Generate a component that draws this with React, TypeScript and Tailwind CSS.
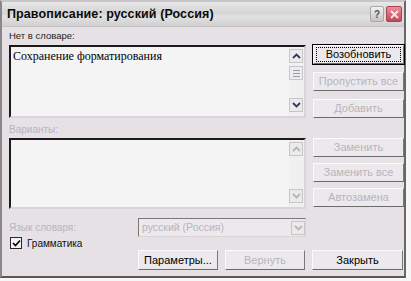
import React from 'react'

const ui = { fontFamily: '"Liberation Sans", Arial, sans-serif' }
const serif = { fontFamily: '"Liberation Serif", "Times New Roman", serif' }

function Btn({ label, disabled, focused, w = 'w-[91px]', h = 'h-[20px]' }: { label: string; disabled?: boolean; focused?: boolean; w?: string; h?: string }) {
  return (
    <div
      className={`${w} ${h} shrink-0 flex items-center justify-center bg-[#ece9ec] border border-t-[#fbfbfb] border-l-[#fbfbfb] border-r-[#7a767a] border-b-[#6e6a6e] text-[11px] ${
        disabled ? 'text-[#b8b4bc]' : 'text-black'
      } ${focused ? 'outline outline-1 outline-black' : ''}`}
    >
      <span className={focused ? 'border border-dotted border-black px-[9px] leading-[13px]' : ''}>{label}</span>
    </div>
  )
}

function Arrow({ up, disabled }: { up?: boolean; disabled?: boolean }) {
  return (
    <div className="w-[14px] h-[14px] bg-[#ecebec] border border-[#c8c4c8] flex items-center justify-center">
      <svg width="9" height="6" viewBox="0 0 9 6">
        <path
          d={up ? 'M1 5 L4.5 1.5 L8 5' : 'M1 1 L4.5 4.5 L8 1'}
          fill="none"
          stroke={disabled ? '#b8b4b8' : '#2a3a6a'}
          strokeWidth="1.8"
        />
      </svg>
    </div>
  )
}

function ListBox({ children, disabled, h }: { children?: React.ReactNode; disabled?: boolean; h: string }) {
  return (
    <div className={`${h} w-[297px] flex bg-[#f4f4f4] border-2 border-t-[#1a1a1a] border-l-[#1a1a1a] border-r-[#d8d4d8] border-b-[#d8d4d8]`}>
      <div className="flex-1 pl-[1px]">{children}</div>
      <div className="w-[15px] flex flex-col justify-between bg-[#f1f0f1] pt-[2px] pb-[4px]">
        <Arrow up disabled={disabled} />
        {!disabled && (
          <div className="flex-1 flex flex-col pt-[3px]">
            <div className="w-[14px] h-[14px] bg-[#eeedee] border border-[#c8c4c8] flex flex-col items-center justify-center gap-[2px]">
              <div className="w-[7px] h-[1px] bg-[#9a98a4]" />
              <div className="w-[7px] h-[1px] bg-[#9a98a4]" />
              <div className="w-[7px] h-[1px] bg-[#9a98a4]" />
            </div>
          </div>
        )}
        <Arrow disabled={disabled} />
      </div>
    </div>
  )
}

export default function App() {
  return (
    <div className="w-[411px] h-[281px] bg-[#f7f7f7] overflow-hidden" style={ui}>
      <div className="w-[406px] h-[278px] flex flex-col bg-[#e5e1e5] border-2 border-l-[#8a868a] border-t-[#c8c4c8] border-r-[#6a666a] border-b-[#5a565a]">
        {/* Title bar */}
        <div className="h-[25px] shrink-0 flex items-center justify-between pl-[5px] pr-[2px] bg-[linear-gradient(180deg,#e8e8e8_0%,#d4d4d4_45%,#e2e2e2_60%,#d0d0d0_100%)] border-b border-[#c6c2c6]">
          <span className="text-[12.5px] font-bold text-[#0a0a0a] tracking-[0.1px]">Правописание: русский (Россия)</span>
          <div className="flex gap-[2px]">
            <div className="w-[14px] h-[16px] rounded-[2px] bg-[linear-gradient(180deg,#f2f2f2,#c4c4c4)] border border-[#a8a8a8] flex items-center justify-center text-[10px] font-bold text-[#505060]">?</div>
            <div className="w-[16px] h-[16px] rounded-[2px] bg-[linear-gradient(180deg,#e89098,#c04858)] border border-[#b04050] flex items-center justify-center">
              <svg width="9" height="9" viewBox="0 0 9 9">
                <path d="M1 1 L8 8 M8 1 L1 8" stroke="#f4e4e8" strokeWidth="2" />
              </svg>
            </div>
          </div>
        </div>

        {/* Body */}
        <div className="flex-1 flex flex-col pl-[7px] pr-[1px]">
          <div className="flex gap-[7px] h-[182px]">
            <div className="flex flex-col">
              <div className="h-[18px] pt-[3px] text-[9.5px] leading-[12px] text-[#222]">Нет в словаре:</div>
              <ListBox h="h-[73px]">
                <div className="text-[12px] leading-[13px] pl-[1px] pt-[3px] text-black" style={serif}>
                  Сохранение форматирования
                </div>
              </ListBox>
              <div className="h-[20px] pt-[6px] text-[10px] leading-[12px] text-[#b8b4bc]">Варианты:</div>
              <ListBox h="h-[71px]" disabled />
            </div>
            <div className="flex flex-col pt-[18px]">
              <div className="flex flex-col gap-[8px]">
                <Btn label="Возобновить" focused h="h-[19px]" />
                <Btn label="Пропустить все" disabled h="h-[19px]" />
                <Btn label="Добавить" disabled h="h-[19px]" />
              </div>
              <div className="flex flex-col gap-[6px] mt-[20px]">
                <Btn label="Заменить" disabled h="h-[19px]" />
                <Btn label="Заменить все" disabled h="h-[19px]" />
                <Btn label="Автозамена" disabled h="h-[19px]" />
              </div>
            </div>
          </div>

          <div className="flex items-center mt-[9px] h-[19px]">
            <div className="w-[129px] text-[10px] text-[#b8b4bc]">Язык словаря:</div>
            <div className="w-[168px] h-[19px] flex items-center justify-between bg-[#ece9ec] border border-t-[#7a767a] border-l-[#7a767a] border-r-[#d8d4d8] border-b-[#d8d4d8]">
              <span className="pl-[3px] text-[10.5px] text-[#b8b4bc]">русский (Россия)</span>
              <Arrow disabled />
            </div>
          </div>

          <div className="flex items-center gap-[5px] h-[12px] pl-[1px]">
            <div className="w-[12px] h-[12px] bg-[#f4f4f4] border border-[#2a262a] flex items-center justify-center">
              <svg width="9" height="8" viewBox="0 0 9 8">
                <path d="M1 4 L3.5 6.5 L8 1.5" fill="none" stroke="#000" strokeWidth="1.6" />
              </svg>
            </div>
            <span className="text-[10px] text-[#111]">Грамматика</span>
          </div>

          <div className="flex mt-[1px] pl-[129px] gap-[7px]">
            <Btn label="Параметры..." w="w-[80px]" />
            <Btn label="Вернуть" w="w-[80px]" disabled />
            <Btn label="Закрыть" />
          </div>
        </div>
      </div>
    </div>
  )
}
